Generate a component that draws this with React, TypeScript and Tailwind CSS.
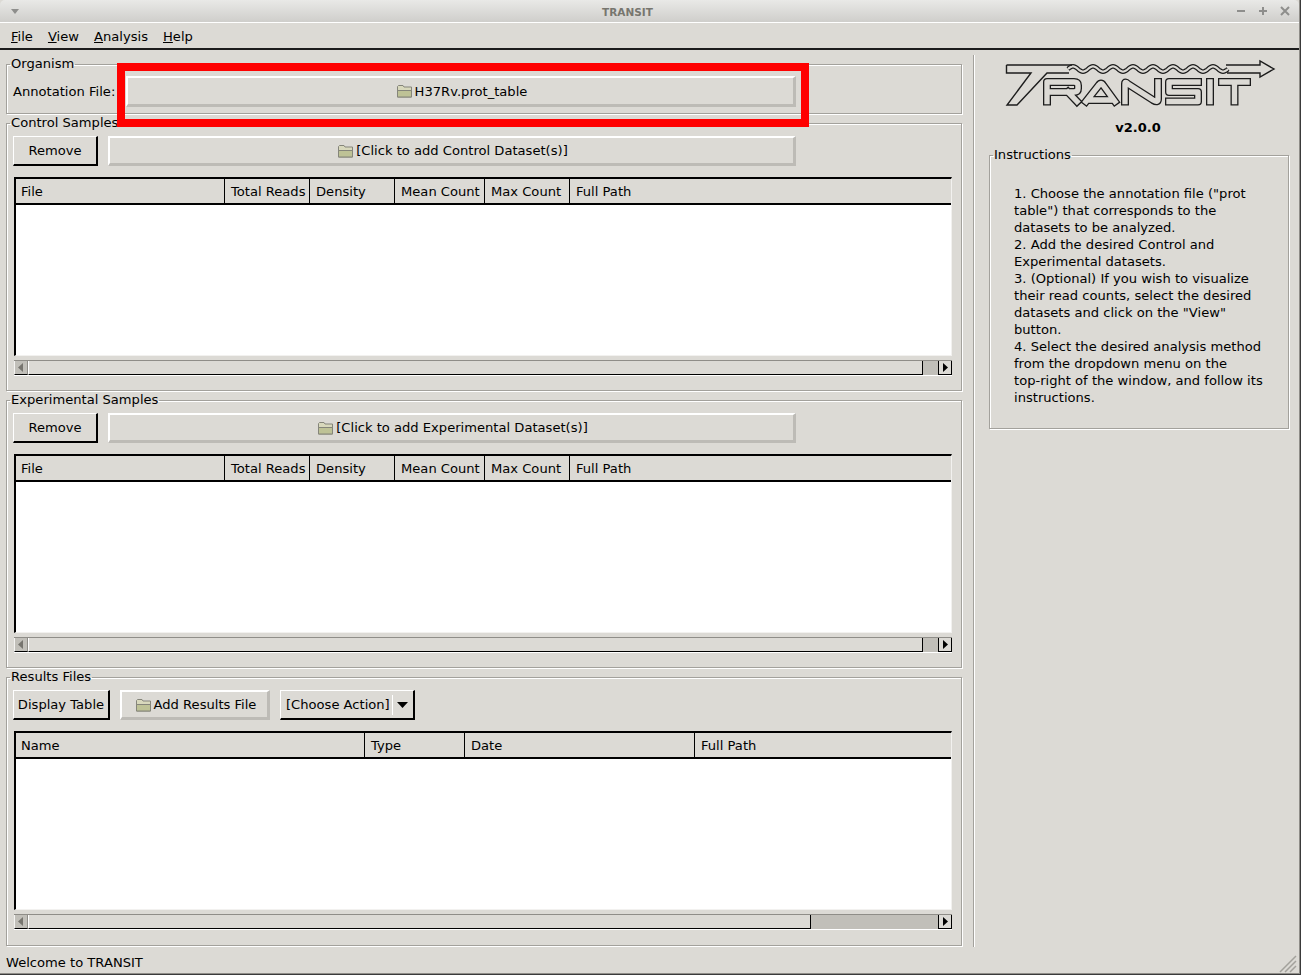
import type { ReactNode } from 'react'

const groove = 'border border-[#a3a19c] shadow-[inset_1px_1px_0_#fff,1px_1px_0_#fff]'
const raised = 'border-t border-l border-t-white border-l-white border-b-2 border-r-2 border-b-black border-r-black'
const flatRaised = 'border-t-2 border-l-2 border-t-white border-l-white border-b-[3px] border-r-[3px] border-b-[#bdbbb6] border-r-[#bdbbb6]'

const sampleCols = ['File', 'Total Reads', 'Density', 'Mean Count', 'Max Count', 'Full Path']
const resultCols = ['Name', 'Type', 'Date', 'Full Path']

function Folder() {
  return (
    <svg width="17" height="14" viewBox="0 0 17 14" className="shrink-0">
      <path d="M1.5 13V2.5L2.5 1.5H7L8 3H15.5V13Z" fill="#d8d8bc" stroke="#85857a" />
      <path d="M1.5 13V6.5H15.5V13Z" fill="#bec296" stroke="#85857a" />
    </svg>
  )
}

function Group({ title, children, className }: { title: string; children: ReactNode; className?: string }) {
  return (
    <fieldset className={`${groove} ${className ?? ''}`}>
      <legend className="ml-[3px] px-px pt-px h-[19px] leading-[15px] bg-[#dcdad5] bg-clip-content whitespace-nowrap">{title}</legend>
      {children}
    </fieldset>
  )
}

function BrowseButton({ label, className }: { label: string; className: string }) {
  return (
    <div className={`${flatRaised} flex items-center justify-center gap-[2px] pl-[2px] ${className}`}>
      <Folder />
      <span className="whitespace-nowrap">{label}</span>
    </div>
  )
}

function Scrollbar({ thumb }: { thumb: string }) {
  return (
    <div className="mt-[4px] h-[16px] w-[938px] flex bg-[#c1bfb9] border-t border-t-[#8f8d88] border-b border-b-white">
      <div className="w-[14px] border-l border-l-[#f4f3f1] border-r border-r-[#8f8d88] border-b border-b-black flex items-center justify-center">
        <svg width="6" height="9" viewBox="0 0 6 9"><path d="M5 0V9L0 4.5Z" fill="#77756f" /></svg>
      </div>
      <div className={`${thumb} bg-[#dcdad5] border-l border-l-white border-r border-r-black border-b border-b-black`} />
      <div className="ml-auto w-[14px] bg-[#dcdad5] border-l border-l-black border-r border-r-black border-b border-b-black flex items-center justify-center">
        <svg width="6" height="9" viewBox="0 0 6 9"><path d="M1 0V9L6 4.5Z" fill="#000" /></svg>
      </div>
    </div>
  )
}

function Table({ cols, grid, thumb }: { cols: string[]; grid: string; thumb: string }) {
  return (
    <div className="mt-[11px] ml-px">
      <div className="w-[938px] border-t-2 border-l-2 border-t-black border-l-black border-r border-r-[#f2f1ef] border-b border-b-[#f2f1ef]">
        <div className={`grid ${grid} h-[26px] border-b-2 border-b-black`}>
          {cols.map((c) => (
            <div key={c} className="px-[6px] first:pl-[5px] leading-[26px] border-r border-r-black last:border-r-0 whitespace-nowrap">
              {c}
            </div>
          ))}
        </div>
        <div className="h-[150px] bg-white" />
      </div>
      <Scrollbar thumb={thumb} />
    </div>
  )
}

function SampleGroup({ title, addLabel }: { title: string; addLabel: string }) {
  return (
    <Group title={title} className="h-[277px]">
      <div className="px-[6px] pt-[3px]">
        <div className="flex gap-[10px]">
          <div className={`${raised} w-[85px] h-[30px] flex items-center justify-center`}>Remove</div>
          <BrowseButton label={addLabel} className="w-[688px] h-[30px]" />
        </div>
        <Table cols={sampleCols} grid="grid-cols-[209px_85px_85px_90px_85px_1fr]" thumb="w-[895px]" />
      </div>
    </Group>
  )
}

function Logo() {
  const letters = 'M1047 101.5V82H1074Q1078 82 1078 85.5V88.5Q1078 92 1074 92H1050M1068 92L1077 101.5M1086 101.5L1099 85Q1101 82 1103 85L1115 101.5M1091 100H1110M1125 101.5V84Q1125 81 1128 84L1153 100Q1158 103 1158 99V82M1198 82H1169V92H1198V101.5H1169M1210 82V101.5M1222 82H1247M1234.5 82V101.5'
  let wave = ''
  for (let x = 1068; x <= 1228; x += 1) {
    const y = 69 - 2.6 * Math.sin(((x - 1068) / 20) * Math.PI * 2)
    wave += `${wave ? 'L' : 'M'}${x} ${y.toFixed(2)}`
  }
  return (
    <svg width="280" height="55" viewBox="1000 55 280 55" fill="none">
      <path d={letters} stroke="#1c1c1c" strokeWidth="8" strokeLinejoin="round" strokeLinecap="square" />
      <path d={letters} stroke="#dcdad5" strokeWidth="5.4" strokeLinejoin="round" strokeLinecap="square" />
      <path d={wave} stroke="#1c1c1c" strokeWidth="4.6" />
      <path d={wave} stroke="#dcdad5" strokeWidth="2.2" />
      <path
        d="M1006.5 65H1072M1226 65H1260V61L1274 69L1260 77V73H1227M1069 73H1047L1017 105H1007L1031 73H1006.5V65"
        stroke="#1c1c1c"
        strokeWidth="1.4"
      />
    </svg>
  )
}

export default function App() {
  return (
    <div className="w-[1301px] h-[975px] flex flex-col bg-[#3a3a3a] text-[13.1px] leading-[17px] text-black font-['DejaVu_Sans',sans-serif] overflow-hidden">
      <div className="w-[1300px] h-[974px] flex flex-col bg-[#dcdad5] border-b border-b-[#8f8d88] border-r border-r-[#8f8d88]">
        {/* window title bar */}
        <div className="h-[23px] shrink-0 flex items-center pl-[11px] pr-[9px] rounded-t-[5px] bg-gradient-to-b from-[#e9e9e7] to-[#cfcecb] border-b border-b-white">
          <svg width="8" height="5" viewBox="0 0 8 5"><path d="M0 0H8L4 5Z" fill="#8e8e8c" /></svg>
          <div className="flex-1 pt-[2px] text-center text-[10.5px] font-bold text-[#77766f]">TRANSIT</div>
          <div className="flex items-center gap-[12px] text-[#8e8e8c]">
            <svg width="10" height="10" viewBox="0 0 10 10"><path d="M1 5H9" stroke="currentColor" strokeWidth="2" /></svg>
            <svg width="10" height="10" viewBox="0 0 10 10"><path d="M1 5H9M5 1V9" stroke="currentColor" strokeWidth="2" /></svg>
            <svg width="10" height="10" viewBox="0 0 10 10"><path d="M1 1L9 9M9 1L1 9" stroke="currentColor" strokeWidth="2" /></svg>
          </div>
        </div>

        {/* menu bar */}
        <div className="h-[27px] shrink-0 flex items-center pl-[11px] pt-[1px] gap-[15px] border-b-2 border-b-[#1c1c1c]">
          <span><u>F</u>ile</span>
          <span><u>V</u>iew</span>
          <span><u>A</u>nalysis</span>
          <span><u>H</u>elp</span>
        </div>

        <div className="flex flex-1 min-h-0 pl-[6px] pt-[5px]">
          <div className="w-[956px] shrink-0 flex flex-col">
            <Group title="Organism" className="h-[59px]">
              <div className="px-[6px] pt-[2px] flex items-center">
                <span className="w-[113px] shrink-0">Annotation File:</span>
                <div className="relative">
                  <BrowseButton label="H37Rv.prot_table" className="w-[670px] h-[31px]" />
                  <div className="absolute -left-[9px] -right-[13px] -top-[13px] -bottom-[20px] border-[8px] border-[#ff0000]" />
                </div>
              </div>
            </Group>
            <SampleGroup title="Control Samples" addLabel="[Click to add Control Dataset(s)]" />
            <SampleGroup title="Experimental Samples" addLabel="[Click to add Experimental Dataset(s)]" />
            <Group title="Results Files" className="h-[278px]">
              <div className="px-[6px] pt-[3px]">
                <div className="flex gap-[10px]">
                  <div className={`${raised} w-[97px] h-[30px] flex items-center justify-center whitespace-nowrap`}>Display Table</div>
                  <BrowseButton label="Add Results File" className="w-[150px] h-[30px]" />
                  <div className={`${raised} w-[135px] h-[30px] flex items-center pl-[5px]`}>
                    <span className="whitespace-nowrap">[Choose Action]</span>
                    <span className="ml-[2px] h-[20px] border-l border-l-white pl-[4px] flex items-center">
                      <svg width="11" height="6" viewBox="0 0 11 6"><path d="M0 0H11L5.5 6Z" fill="#000" /></svg>
                    </span>
                  </div>
                </div>
                <Table cols={resultCols} grid="grid-cols-[349px_100px_230px_1fr]" thumb="w-[783px]" />
              </div>
            </Group>
          </div>

          <div className="ml-[11px] w-[2px] h-[892px] shrink-0 border-l border-l-[#a3a19c] border-r border-r-white" />

          <div className="ml-[14px] w-[300px] shrink-0 flex flex-col">
            <div className="h-[55px] pl-[11px]"><Logo /></div>
            <div className="mt-[9px] pr-[2px] text-center font-bold text-[13px]">v2.0.0</div>
            <Group title="Instructions" className="mt-[10px] h-[283px]">
              <div className="pl-[24px] pr-[20px] pt-[20px]">
                <p>1. Choose the annotation file ("prot table") that corresponds to the datasets to be analyzed.</p>
                <p>2. Add the desired Control and Experimental datasets.</p>
                <p>3. (Optional) If you wish to visualize their read counts, select the desired datasets and click on the "View" button.</p>
                <p>
                  4. Select the desired analysis method from the dropdown menu on the
                  <br />
                  top-right of the window, and follow its instructions.
                </p>
              </div>
            </Group>
          </div>
        </div>

        {/* status bar */}
        <div className="h-[27px] shrink-0 flex items-center justify-between pl-[6px] pr-[2px]">
          <span className="mt-[6px]">Welcome to TRANSIT</span>
          <svg width="18" height="18" viewBox="0 0 18 18" className="self-end">
            <path d="M1 17L17 1M6 17L17 6M11 17L17 11" stroke="#a3a19c" strokeWidth="1.5" />
          </svg>
        </div>
      </div>
    </div>
  )
}
